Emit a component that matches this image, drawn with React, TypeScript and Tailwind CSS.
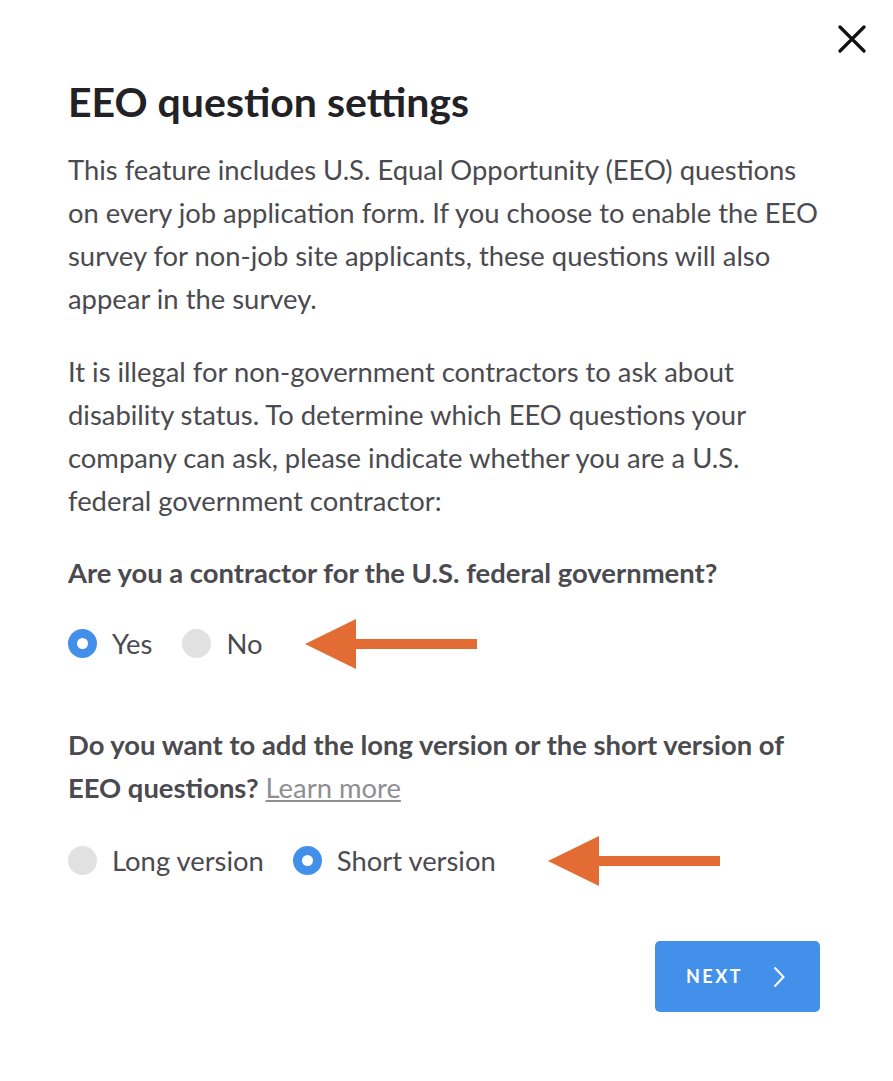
import React, { useState } from 'react';

const Arrow: React.FC = () => (
  <svg width="172" height="52" viewBox="0 0 172 52" className="block">
    <polygon points="0,26 51,1 51,51" fill="#e26c33" />
    <rect x="50" y="21" width="122" height="10" fill="#e26c33" />
  </svg>
);

const Radio: React.FC<{ checked: boolean; label: string; onClick: () => void }> = ({ checked, label, onClick }) => (
  <button onClick={onClick} className="flex items-center gap-[15px]">
    {checked ? (
      <span className="w-[29px] h-[29px] rounded-full bg-[#4390ea] flex items-center justify-center">
        <span className="w-[11px] h-[11px] rounded-full bg-white" />
      </span>
    ) : (
      <span className="w-[29px] h-[29px] rounded-full bg-[#e1e1e1]" />
    )}
    <span className="text-[27.4px] text-[#4a4a4f]">{label}</span>
  </button>
);

export default function App() {
  const [contractor, setContractor] = useState<'yes' | 'no'>('yes');
  const [version, setVersion] = useState<'long' | 'short'>('short');

  return (
    <div className="min-h-screen bg-white font-['Lato','Liberation_Sans',sans-serif] relative">
      <button className="absolute right-[27px] top-[25px]">
        <svg width="28" height="28" viewBox="0 0 28 28">
          <path d="M2 2 L26 26 M26 2 L2 26" stroke="#111" strokeWidth="3.2" strokeLinecap="round" />
        </svg>
      </button>

      <div className="pl-[68px] pt-[76px] w-[826px]">
        <h1 className="text-[41px] font-bold text-[#222226] leading-[52px]">EEO question settings</h1>

        <p className="mt-[20px] text-[27.4px] leading-[43px] text-[#4a4a4f]">
          This feature includes U.S. Equal Opportunity (EEO) questions on every job application form. If you choose to enable the EEO survey for non-job site applicants, these questions will also appear in the survey.
        </p>

        <p className="mt-[30px] text-[27.4px] leading-[43px] text-[#4a4a4f]">
          It is illegal for non-government contractors to ask about disability status. To determine which EEO questions your company can ask, please indicate whether you are a U.S. federal government contractor:
        </p>

        <p className="mt-[29px] text-[27.4px] leading-[43px] font-bold text-[#4a4a4f]">
          Are you a contractor for the U.S. federal government?
        </p>

        <div className="mt-[23px] flex items-center h-[54px]">
          <Radio checked={contractor === 'yes'} label="Yes" onClick={() => setContractor('yes')} />
          <div className="ml-[30px]">
            <Radio checked={contractor === 'no'} label="No" onClick={() => setContractor('no')} />
          </div>
          <div className="ml-[43px]">
            <Arrow />
          </div>
        </div>

        <p className="mt-[52px] text-[27.4px] leading-[43px] font-bold text-[#4a4a4f]">
          Do you want to add the long version or the short version of EEO questions?
          <a href="#" className="inline-block ml-[7px] font-normal text-[#8e8e93] underline underline-offset-2">Learn more</a>
        </p>

        <div className="mt-[25px] flex items-center h-[54px]">
          <Radio checked={version === 'long'} label="Long version" onClick={() => setVersion('long')} />
          <div className="ml-[29px]">
            <Radio checked={version === 'short'} label="Short version" onClick={() => setVersion('short')} />
          </div>
          <div className="ml-[52px]">
            <Arrow />
          </div>
        </div>

        <div className="mt-[53px] flex justify-end pr-[6px]">
          <button className="w-[165px] h-[71px] rounded-[5px] bg-[#4390ea] flex items-center justify-center gap-[30px] pr-[4px] text-white">
            <span className="text-[18px] font-bold tracking-[2.5px]">NEXT</span>
            <svg width="12" height="22" viewBox="0 0 12 22">
              <path d="M1.5 1.5 L10.5 11 L1.5 20.5" stroke="white" strokeWidth="2" fill="none" />
            </svg>
          </button>
        </div>
      </div>
    </div>
  );
}
